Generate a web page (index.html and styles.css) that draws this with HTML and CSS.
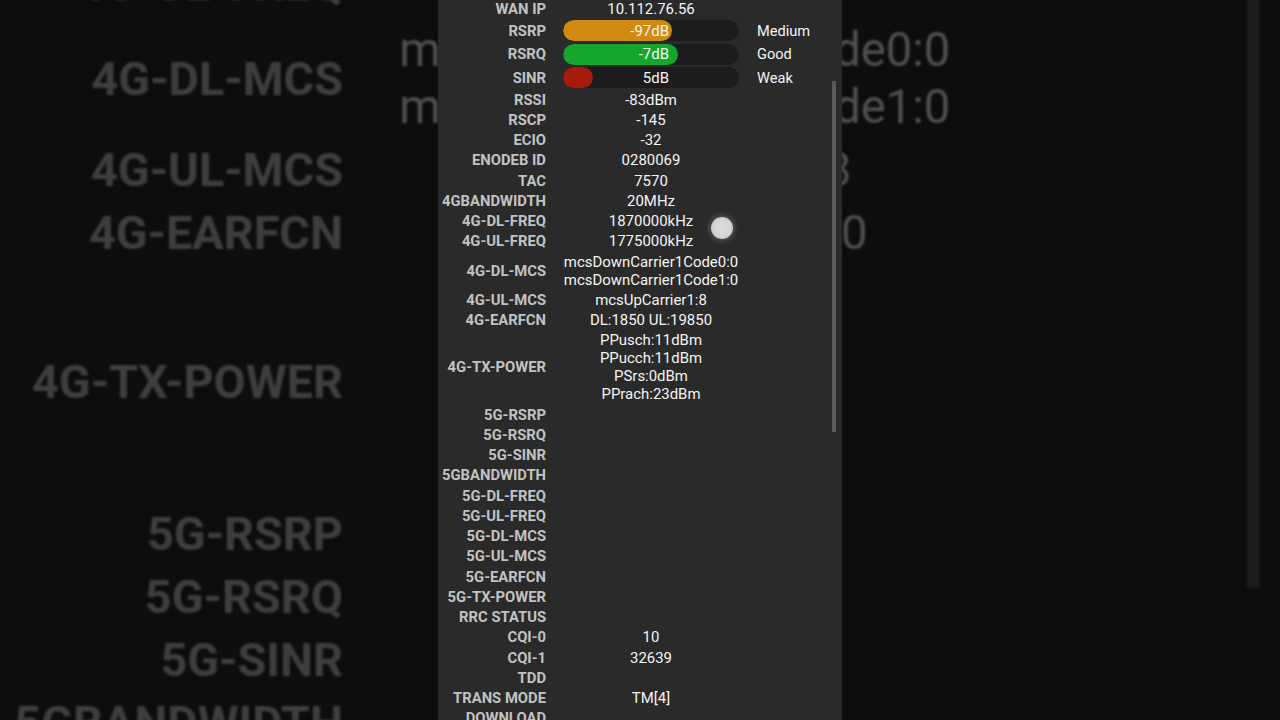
FILE: index.html
```html
<!DOCTYPE html>
<html lang="en">
<head>
<meta charset="utf-8">
<title>Signal info</title>
<link rel="stylesheet" href="styles.css">
</head>
<body>
<div class="stage">
  <div class="bg-layer" aria-hidden="true"></div>
  <div class="panel">
    <div class="sheet">
      <div class="rows">
        <div class="row"><div class="label">WAN IP</div><div class="value">10.112.76.56</div></div>
        <div class="row bar-row"><div class="label">RSRP</div><div class="value"><div class="bar"><div class="fill orange" style="width:62%"></div><span class="bar-text">-97dB</span></div></div><div class="status">Medium</div></div>
        <div class="row bar-row"><div class="label">RSRQ</div><div class="value"><div class="bar"><div class="fill green" style="width:65.5%"></div><span class="bar-text">-7dB</span></div></div><div class="status">Good</div></div>
        <div class="row bar-row"><div class="label">SINR</div><div class="value"><div class="bar"><div class="fill red" style="width:17%"></div><span class="bar-text">5dB</span></div></div><div class="status">Weak</div></div>
        <div class="row"><div class="label">RSSI</div><div class="value">-83dBm</div></div>
        <div class="row"><div class="label">RSCP</div><div class="value">-145</div></div>
        <div class="row"><div class="label">ECIO</div><div class="value">-32</div></div>
        <div class="row"><div class="label">ENODEB ID</div><div class="value">0280069</div></div>
        <div class="row"><div class="label">TAC</div><div class="value">7570</div></div>
        <div class="row"><div class="label">4GBANDWIDTH</div><div class="value">20MHz</div></div>
        <div class="row"><div class="label">4G-DL-FREQ</div><div class="value">1870000kHz</div></div>
        <div class="row"><div class="label">4G-UL-FREQ</div><div class="value">1775000kHz</div></div>
        <div class="row"><div class="label">4G-DL-MCS</div><div class="value">mcsDownCarrier1Code0:0<br>mcsDownCarrier1Code1:0</div></div>
        <div class="row"><div class="label">4G-UL-MCS</div><div class="value">mcsUpCarrier1:8</div></div>
        <div class="row"><div class="label">4G-EARFCN</div><div class="value">DL:1850 UL:19850</div></div>
        <div class="row"><div class="label">4G-TX-POWER</div><div class="value">PPusch:11dBm<br>PPucch:11dBm<br>PSrs:0dBm<br>PPrach:23dBm</div></div>
        <div class="row"><div class="label">5G-RSRP</div><div class="value"></div></div>
        <div class="row"><div class="label">5G-RSRQ</div><div class="value"></div></div>
        <div class="row"><div class="label">5G-SINR</div><div class="value"></div></div>
        <div class="row"><div class="label">5GBANDWIDTH</div><div class="value"></div></div>
        <div class="row"><div class="label">5G-DL-FREQ</div><div class="value"></div></div>
        <div class="row"><div class="label">5G-UL-FREQ</div><div class="value"></div></div>
        <div class="row"><div class="label">5G-DL-MCS</div><div class="value"></div></div>
        <div class="row"><div class="label">5G-UL-MCS</div><div class="value"></div></div>
        <div class="row"><div class="label">5G-EARFCN</div><div class="value"></div></div>
        <div class="row"><div class="label">5G-TX-POWER</div><div class="value"></div></div>
        <div class="row"><div class="label">RRC STATUS</div><div class="value"></div></div>
        <div class="row"><div class="label">CQI-0</div><div class="value">10</div></div>
        <div class="row"><div class="label">CQI-1</div><div class="value">32639</div></div>
        <div class="row"><div class="label">TDD</div><div class="value"></div></div>
        <div class="row"><div class="label">TRANS MODE</div><div class="value">TM[4]</div></div>
        <div class="row"><div class="label">DOWNLOAD</div><div class="value"></div></div>
        <div class="row"><div class="label">UPLOAD</div><div class="value"></div></div>
      </div>
      <div class="scrollbar"></div>
    </div>
    <div class="touch"></div>
  </div>
</div>
<script src="script.js"></script>
</body>
</html>
```
FILE: styles.css
```css
html, body {
  margin: 0;
  padding: 0;
  background: #0d0d0d;
  overflow: hidden;
}
.stage {
  position: relative;
  width: 1280px;
  height: 720px;
  overflow: hidden;
  display: flex;
  justify-content: center;
  font-family: Roboto, "Noto Sans", "Liberation Sans", sans-serif;
}
.bg-layer {
  position: absolute;
  left: 0;
  top: 0;
  width: 1280px;
  height: 720px;
  display: flex;
  justify-content: center;
  transform: scale(3.16);
  transform-origin: 640px 360px;
  filter: brightness(0.32) blur(0.35px);
}
.panel {
  position: relative;
  width: 404px;
  height: 720px;
  flex: none;
}
.sheet {
  position: relative;
  width: 404px;
  height: 720px;
  background: #2a2a2a;
  overflow: hidden;
}
.rows {
  margin-top: -1.5px;
  padding-left: 4px;
}
.row {
  display: flex;
  align-items: center;
  padding: 1.13px 0;
  line-height: 18px;
}
.label {
  width: 104px;
  margin-right: 17px;
  text-align: right;
  font-weight: 700;
  font-size: 14.8px;
  color: #c2c2c2;
  white-space: nowrap;
  flex: none;
}
.value {
  width: 176px;
  text-align: center;
  font-size: 14.95px;
  color: #f4f4f4;
  white-space: nowrap;
  flex: none;
}
.status {
  margin-left: 18px;
  font-size: 14.6px;
  color: #f4f4f4;
}
.bar-row {
  padding: 1.3px 0;
}
.bar {
  position: relative;
  height: 21px;
  border-radius: 11px;
  background: #1c1c1c;
  display: flex;
  align-items: center;
  justify-content: flex-end;
  overflow: hidden;
}
.fill {
  position: absolute;
  left: 0;
  top: 0;
  bottom: 0;
  border-radius: 11px;
}
.orange { background: #d08a10; }
.green { background: #17a62c; }
.red { background: #a81a0c; }
.bar-text {
  position: relative;
  padding-right: 70px;
  color: #f6f6f6;
}
.scrollbar {
  position: absolute;
  left: 394px;
  top: 81px;
  width: 4px;
  height: 351px;
  background: #5a5a5a;
}
.touch {
  position: absolute;
  left: 273px;
  top: 217px;
  width: 22px;
  height: 22px;
  border-radius: 50%;
  background: radial-gradient(circle, #dedede 0%, #d4d4d4 55%, #c0c0c0 80%, #8e8e8e 100%);
  box-shadow: 0 0 5px 2px rgba(170, 170, 185, 0.35);
}
```
FILE: script.js
```js
(function () {
  var sheet = document.querySelector('.panel .sheet');
  var layer = document.querySelector('.bg-layer');
  if (sheet && layer) {
    var copy = sheet.cloneNode(true);
    layer.appendChild(copy);
  }
})();
```
